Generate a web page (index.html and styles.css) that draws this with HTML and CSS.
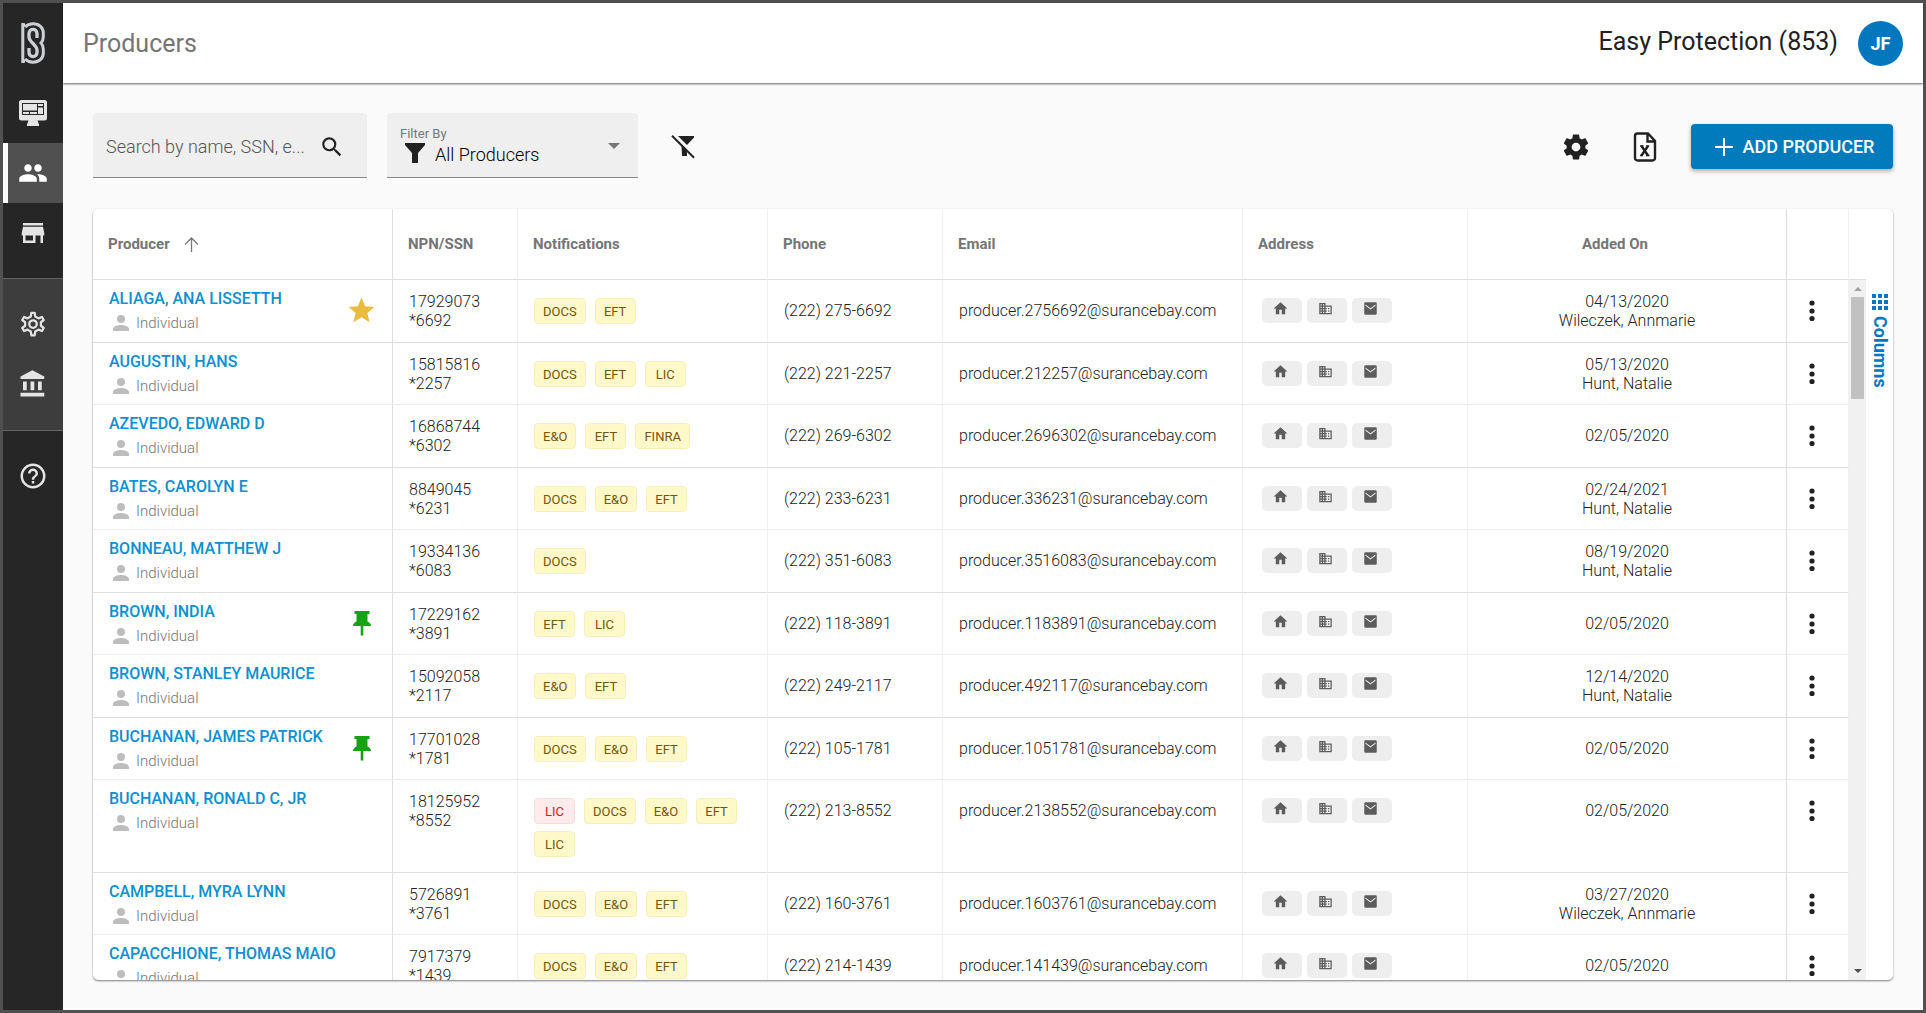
FILE: index.html
```html
<!DOCTYPE html>
<html lang="en">
<head>
  <meta charset="UTF-8" />
  <meta name="viewport" content="width=device-width, initial-scale=1.0" />
  <title>Producers</title>
  <link rel="stylesheet" href="styles.css">
</head>
<body>
  <!-- shared icons -->
  <svg class="sprite" aria-hidden="true">
    <symbol id="i-monitor" viewBox="0 0 28 26">
      <path fill-rule="evenodd" d="M2.500 0h23a2.500 2.500 0 0 1 2.500 2.500v15.500a2.500 2.500 0 0 1-2.500 2.500h-7l1.500 4v1.500h-12v-1.500l1.500-4h-7a2.500 2.500 0 0 1-2.500-2.500v-15.500a2.500 2.500 0 0 1 2.500-2.500zM3 3v12h22v-12z"/>
      <path d="M4 4h14v6.500H4zM19 4h5v2h-5zM19 7.500h5V14h-5zM4 12h6v2H4zM11 12h7v2h-7z"/>
    </symbol>
    <symbol id="i-people" viewBox="0 0 24 24"><path d="M16 11c1.660 0 2.990-1.340 2.990-3S17.660 5 16 5c-1.660 0-3 1.340-3 3s1.340 3 3 3zm-8 0c1.660 0 2.990-1.340 2.990-3S9.660 5 8 5C6.340 5 5 6.340 5 8s1.340 3 3 3zm0 2c-2.330 0-7 1.170-7 3.500V19h14v-2.500c0-2.330-4.670-3.500-7-3.500zm8 0c-.29 0-.62.02-.97.05 1.160.84 1.970 1.970 1.970 3.450V19h6v-2.500c0-2.330-4.670-3.500-7-3.500z"/></symbol>
    <symbol id="i-store" viewBox="0 0 24 24"><path d="M20 4H4v2h16V4zm1 10v-2l-1-5H4l-1 5v2h1v6h10v-6h4v6h2v-6h1zm-9 4H6v-4h6v4z"/></symbol>
    <symbol id="i-cog" viewBox="0 0 24 24"><path d="M12,15.5A3.5,3.5 0 0,1 8.5,12A3.5,3.5 0 0,1 12,8.5A3.5,3.5 0 0,1 15.5,12A3.5,3.5 0 0,1 12,15.5M19.43,12.97C19.47,12.65 19.5,12.33 19.5,12C19.5,11.67 19.47,11.34 19.43,11L21.54,9.37C21.73,9.22 21.78,8.95 21.66,8.73L19.66,5.27C19.54,5.05 19.27,4.96 19.05,5.05L16.56,6.05C16.04,5.66 15.5,5.32 14.87,5.07L14.5,2.42C14.46,2.18 14.25,2 14,2H10C9.75,2 9.54,2.18 9.5,2.42L9.13,5.07C8.5,5.32 7.96,5.66 7.44,6.05L4.95,5.05C4.73,4.96 4.46,5.05 4.34,5.27L2.34,8.73C2.21,8.95 2.27,9.22 2.46,9.37L4.57,11C4.53,11.34 4.5,11.67 4.5,12C4.5,12.33 4.53,12.65 4.57,12.97L2.46,14.63C2.27,14.78 2.21,15.05 2.34,15.27L4.34,18.73C4.46,18.95 4.73,19.03 4.95,18.95L7.44,17.94C7.96,18.34 8.5,18.68 9.13,18.93L9.5,21.58C9.54,21.82 9.75,22 10,22H14C14.25,22 14.46,21.82 14.5,21.58L14.87,18.93C15.5,18.67 16.04,18.34 16.56,17.94L19.05,18.95C19.27,19.03 19.54,18.95 19.66,18.73L21.66,15.27C21.78,15.05 21.73,14.78 21.54,14.63L19.43,12.97Z"/></symbol>
    <symbol id="i-cog-line" viewBox="0 0 24 24">
      <g fill="none" stroke="currentColor" stroke-width="1.8" stroke-linejoin="round"><path d="M10.700 3h2.600l.5 3 2.600 1.500 2.800-1.100 1.400 2.400-2.300 1.800v2.800l2.300 1.800-1.400 2.400-2.800-1.100-2.600 1.500-.5 3h-2.600l-.5-3-2.600-1.500-2.800 1.100-1.400-2.400 2.300-1.800v-2.800l-2.300-1.800 1.400-2.400 2.800 1.100 2.600-1.500z"/><circle cx="12" cy="12" r="3"/></g>
    </symbol>
    <symbol id="i-bank" viewBox="0 0 24 24"><path d="M11.5,1L2,6V8H21V6M16,10V17H19V10M2,22H21V19H2M10,10V17H13V10M4,10V17H7V10H4Z"/></symbol>
    <symbol id="i-help" viewBox="0 0 24 24"><path d="M11,18H13V16H11V18M12,2A10,10 0 0,0 2,12A10,10 0 0,0 12,22A10,10 0 0,0 22,12A10,10 0 0,0 12,2M12,20C7.59,20 4,16.41 4,12C4,7.59 7.59,4 12,4C16.41,4 20,7.59 20,12C20,16.41 16.41,20 12,20M12,6A4,4 0 0,0 8,10H10A2,2 0 0,1 12,8A2,2 0 0,1 14,10C14,12 11,11.75 11,15H13C13,12.75 16,12.5 16,10A4,4 0 0,0 12,6Z"/></symbol>
    <symbol id="i-search" viewBox="0 0 24 24"><path d="M15.500 14h-.79l-.28-.27A6.471 6.471 0 0 0 16 9.500 6.500 6.500 0 1 0 9.500 16c1.610 0 3.090-.59 4.230-1.570l.27.28v.79l5 4.990L20.490 19l-4.990-5zm-6 0C7.010 14 5 11.990 5 9.500S7.010 5 9.500 5 14 7.010 14 9.500 11.990 14 9.500 14z"/></symbol>
    <symbol id="i-funnel" viewBox="0 0 20 20"><path d="M0 0h20v2l-7 8v10H7V10L0 2z"/></symbol>
    <symbol id="i-funnel-off" viewBox="0 0 24 24"><path d="M7 1h16v1.500L16 10zM10.500 11l5.500 5.500V21h-5z"/><path d="M1 .8l22 22" stroke="currentColor" stroke-width="2"/></symbol>
    <symbol id="i-excel" viewBox="0 0 24 30">
      <path d="M4 1.500h11l7 7.500v17a2.500 2.500 0 0 1-2.500 2.500h-15A2.500 2.500 0 0 1 2 26V4a2.500 2.500 0 0 1 2-2.500zM14.500 2v7.500H22" fill="none" stroke="currentColor" stroke-width="2.4"/>
      <path d="M8.500 14l6.500 9.500M15 14l-6.500 9.500" fill="none" stroke="currentColor" stroke-width="2.400"/>
      <path d="M7 14h3.500M13.200 14h3M7 23.600h3M13 23.600h3.500" fill="none" stroke="currentColor" stroke-width="1.500"/>
    </symbol>
    <symbol id="i-person" viewBox="0 0 16 16"><path d="M8 0a4 4 0 1 1 0 8 4 4 0 0 1 0-8zm0 10c3 0 8 1.300 8 4v2H0v-2c0-2.700 5-4 8-4z"/></symbol>
    <symbol id="i-star" viewBox="0 0 24 24"><path d="M12,17.27L18.18,21L16.54,13.97L22,9.24L14.81,8.62L12,2L9.19,8.62L2,9.24L7.45,13.97L5.82,21L12,17.27Z"/></symbol>
    <symbol id="i-pin" viewBox="0 0 18 25"><path d="M1.500 0h15v3h-2v7.500c2 1 3.500 2.200 3.500 4.500h-7.700v9.500H7.700V15H0c0-2.300 1.500-3.500 3.500-4.500V3h-2z"/></symbol>
    <symbol id="i-home" viewBox="0 0 24 24"><path d="M10,21V14H14V21H19.500V12H23L12,2L1,12H4.500V21H10Z"/></symbol>
    <symbol id="i-office" viewBox="0 0 24 24"><path d="M12 7V3H2v18h20V7H12zM6 19H4v-2h2v2zm0-4H4v-2h2v2zm0-4H4V9h2v2zm0-4H4V5h2v2zm4 12H8v-2h2v2zm0-4H8v-2h2v2zm0-4H8V9h2v2zm0-4H8V5h2v2zm10 12h-8v-2h2v-2h-2v-2h2v-2h-2V9h8v10zm-2-8h-2v2h2v-2zm0 4h-2v2h2v-2z"/></symbol>
    <symbol id="i-mail" viewBox="0 0 24 24"><path fill-rule="evenodd" d="M4 2h16a2 2 0 0 1 2 2v16a2 2 0 0 1-2 2H4a2 2 0 0 1-2-2V4a2 2 0 0 1 2-2zM4 5.500v2l8 6 8-6v-2l-8 6z"/></symbol>
    <symbol id="i-dots" viewBox="0 0 6 22"><circle cx="3" cy="3" r="2.600"/><circle cx="3" cy="11" r="2.600"/><circle cx="3" cy="18.500" r="2.600"/></symbol>
  </svg>

  <div class="app">
    <nav class="sidebar">
      <div class="nav-group">
        <a class="logo" href="#" aria-label="Home">
          <svg width="24" height="42" viewBox="0 0 24 42">
            <path d="M1.800 1v40M1.500 2.800h2.500M1.500 39.200h2.500M4 5C6.500 2.500 9 1.800 12 1.800c6 0 10.300 3.700 10.300 9v4c0 3-.8 4.700-2.300 6.200 1.500 1.500 2.300 3.200 2.300 6.200v4c0 5.300-4.300 9-10.300 9-3 0-5.500-.7-8-3.200" stroke-width="3"/>
            <path d="M16 16v-4.500c0-5.500-8-5.500-8 0V15c0 5 8 8 8 13v2.500c0 5.500-8 5.500-8 0V26" stroke-width="3.300"/>
          </svg>
        </a>
        <a class="nav-item" href="#" aria-label="Dashboard"><svg class="nav-wide"><use href="#i-monitor"/></svg></a>
        <a class="nav-item active" href="#" aria-label="Producers"><svg><use href="#i-people"/></svg></a>
        <a class="nav-item" href="#" aria-label="Agencies"><svg><use href="#i-store"/></svg></a>
      </div>
      <div class="nav-group nav-group-mid">
        <a class="nav-item" href="#" aria-label="Settings"><svg><use href="#i-cog-line"/></svg></a>
        <a class="nav-item" href="#" aria-label="Carriers"><svg><use href="#i-bank"/></svg></a>
      </div>
      <div class="nav-group nav-group-last">
        <a class="nav-item" href="#" aria-label="Help"><svg><use href="#i-help"/></svg></a>
      </div>
    </nav>

    <div class="page">
      <header class="topbar">
        <h1>Producers</h1>
        <div class="account">
          <span class="agency">Easy Protection (853)</span>
          <button class="avatar">JF</button>
        </div>
      </header>

      <main class="content">
        <div class="toolbar">
          <div class="field search">
            <input type="text" aria-label="Search" placeholder="Search by name, SSN, e..." />
            <svg width="26" height="26"><use href="#i-search"/></svg>
          </div>
          <div class="field filter">
            <label for="filterBy">Filter By</label>
            <div class="filter-value">
              <svg width="20" height="20"><use href="#i-funnel"/></svg>
              <select id="filterBy"><option>All Producers</option></select>
            </div>
            <span class="caret"></span>
          </div>
          <button class="icon-btn" aria-label="Clear filters"><svg width="24" height="24"><use href="#i-funnel-off"/></svg></button>
          <div class="toolbar-right">
            <button class="icon-btn" aria-label="Table settings"><svg width="30" height="30"><use href="#i-cog"/></svg></button>
            <button class="icon-btn" aria-label="Export to Excel"><svg width="24" height="30"><use href="#i-excel"/></svg></button>
            <button class="add-btn"><svg width="18" height="18" viewBox="0 0 18 18"><path d="M9 0v18M0 9h18" stroke="#fff" stroke-width="2"/></svg>ADD PRODUCER</button>
          </div>
        </div>

        <div class="card">
          <div class="table-wrap">
            <table>
              <colgroup>
                <col class="col-producer"><col class="col-npn"><col class="col-notif"><col class="col-phone"><col class="col-email"><col class="col-address"><col><col class="col-menu">
              </colgroup>
              <thead>
                <tr>
                  <th class="pinned"><div class="sorted">Producer <svg width="15" height="15" viewBox="0 0 15 15"><path d="M7.500 15V1M1 7.500L7.500 1 14 7.500" fill="none" stroke="#777" stroke-width="1.300"/></svg></div></th>
                  <th>NPN/SSN</th>
                  <th>Notifications</th>
                  <th>Phone</th>
                  <th>Email</th>
                  <th>Address</th>
                  <th class="added pinned">Added On</th>
                  <th></th>
                </tr>
              </thead>
              <tbody>
                <tr>
                  <td class="producer pinned"><div class="who"><div><a href="#">ALIAGA, ANA LISSETTH</a><span class="kind"><svg><use href="#i-person"/></svg>Individual</span></div><svg class="star"><use href="#i-star"/></svg></div></td>
                  <td class="two">17929073<br>*6692</td>
                  <td><div class="chips"><span>DOCS</span><span>EFT</span></div></td>
                  <td class="one">(222) 275-6692</td>
                  <td class="one">producer.2756692@surancebay.com</td>
                  <td><div class="places"><button aria-label="Home"><svg><use href="#i-home"/></svg></button><button aria-label="Office"><svg><use href="#i-office"/></svg></button><button aria-label="Mail"><svg><use href="#i-mail"/></svg></button></div></td>
                  <td class="two added pinned">04/13/2020<br>Wileczek, Annmarie</td>
                  <td><button class="menu" aria-label="More"><svg><use href="#i-dots"/></svg></button></td>
                </tr>
                <tr>
                  <td class="producer pinned"><div class="who"><div><a href="#">AUGUSTIN, HANS</a><span class="kind"><svg><use href="#i-person"/></svg>Individual</span></div></div></td>
                  <td class="two">15815816<br>*2257</td>
                  <td><div class="chips"><span>DOCS</span><span>EFT</span><span>LIC</span></div></td>
                  <td class="one">(222) 221-2257</td>
                  <td class="one">producer.212257@surancebay.com</td>
                  <td><div class="places"><button aria-label="Home"><svg><use href="#i-home"/></svg></button><button aria-label="Office"><svg><use href="#i-office"/></svg></button><button aria-label="Mail"><svg><use href="#i-mail"/></svg></button></div></td>
                  <td class="two added pinned">05/13/2020<br>Hunt, Natalie</td>
                  <td><button class="menu" aria-label="More"><svg><use href="#i-dots"/></svg></button></td>
                </tr>
                <tr>
                  <td class="producer pinned"><div class="who"><div><a href="#">AZEVEDO, EDWARD D</a><span class="kind"><svg><use href="#i-person"/></svg>Individual</span></div></div></td>
                  <td class="two">16868744<br>*6302</td>
                  <td><div class="chips"><span>E&amp;O</span><span>EFT</span><span>FINRA</span></div></td>
                  <td class="one">(222) 269-6302</td>
                  <td class="one">producer.2696302@surancebay.com</td>
                  <td><div class="places"><button aria-label="Home"><svg><use href="#i-home"/></svg></button><button aria-label="Office"><svg><use href="#i-office"/></svg></button><button aria-label="Mail"><svg><use href="#i-mail"/></svg></button></div></td>
                  <td class="one added pinned">02/05/2020</td>
                  <td><button class="menu" aria-label="More"><svg><use href="#i-dots"/></svg></button></td>
                </tr>
                <tr>
                  <td class="producer pinned"><div class="who"><div><a href="#">BATES, CAROLYN E</a><span class="kind"><svg><use href="#i-person"/></svg>Individual</span></div></div></td>
                  <td class="two">8849045<br>*6231</td>
                  <td><div class="chips"><span>DOCS</span><span>E&amp;O</span><span>EFT</span></div></td>
                  <td class="one">(222) 233-6231</td>
                  <td class="one">producer.336231@surancebay.com</td>
                  <td><div class="places"><button aria-label="Home"><svg><use href="#i-home"/></svg></button><button aria-label="Office"><svg><use href="#i-office"/></svg></button><button aria-label="Mail"><svg><use href="#i-mail"/></svg></button></div></td>
                  <td class="two added pinned">02/24/2021<br>Hunt, Natalie</td>
                  <td><button class="menu" aria-label="More"><svg><use href="#i-dots"/></svg></button></td>
                </tr>
                <tr>
                  <td class="producer pinned"><div class="who"><div><a href="#">BONNEAU, MATTHEW J</a><span class="kind"><svg><use href="#i-person"/></svg>Individual</span></div></div></td>
                  <td class="two">19334136<br>*6083</td>
                  <td><div class="chips"><span>DOCS</span></div></td>
                  <td class="one">(222) 351-6083</td>
                  <td class="one">producer.3516083@surancebay.com</td>
                  <td><div class="places"><button aria-label="Home"><svg><use href="#i-home"/></svg></button><button aria-label="Office"><svg><use href="#i-office"/></svg></button><button aria-label="Mail"><svg><use href="#i-mail"/></svg></button></div></td>
                  <td class="two added pinned">08/19/2020<br>Hunt, Natalie</td>
                  <td><button class="menu" aria-label="More"><svg><use href="#i-dots"/></svg></button></td>
                </tr>
                <tr>
                  <td class="producer pinned"><div class="who"><div><a href="#">BROWN, INDIA</a><span class="kind"><svg><use href="#i-person"/></svg>Individual</span></div><svg class="pin"><use href="#i-pin"/></svg></div></td>
                  <td class="two">17229162<br>*3891</td>
                  <td><div class="chips"><span>EFT</span><span>LIC</span></div></td>
                  <td class="one">(222) 118-3891</td>
                  <td class="one">producer.1183891@surancebay.com</td>
                  <td><div class="places"><button aria-label="Home"><svg><use href="#i-home"/></svg></button><button aria-label="Office"><svg><use href="#i-office"/></svg></button><button aria-label="Mail"><svg><use href="#i-mail"/></svg></button></div></td>
                  <td class="one added pinned">02/05/2020</td>
                  <td><button class="menu" aria-label="More"><svg><use href="#i-dots"/></svg></button></td>
                </tr>
                <tr>
                  <td class="producer pinned"><div class="who"><div><a href="#">BROWN, STANLEY MAURICE</a><span class="kind"><svg><use href="#i-person"/></svg>Individual</span></div></div></td>
                  <td class="two">15092058<br>*2117</td>
                  <td><div class="chips"><span>E&amp;O</span><span>EFT</span></div></td>
                  <td class="one">(222) 249-2117</td>
                  <td class="one">producer.492117@surancebay.com</td>
                  <td><div class="places"><button aria-label="Home"><svg><use href="#i-home"/></svg></button><button aria-label="Office"><svg><use href="#i-office"/></svg></button><button aria-label="Mail"><svg><use href="#i-mail"/></svg></button></div></td>
                  <td class="two added pinned">12/14/2020<br>Hunt, Natalie</td>
                  <td><button class="menu" aria-label="More"><svg><use href="#i-dots"/></svg></button></td>
                </tr>
                <tr>
                  <td class="producer pinned"><div class="who"><div><a href="#">BUCHANAN, JAMES PATRICK</a><span class="kind"><svg><use href="#i-person"/></svg>Individual</span></div><svg class="pin"><use href="#i-pin"/></svg></div></td>
                  <td class="two">17701028<br>*1781</td>
                  <td><div class="chips"><span>DOCS</span><span>E&amp;O</span><span>EFT</span></div></td>
                  <td class="one">(222) 105-1781</td>
                  <td class="one">producer.1051781@surancebay.com</td>
                  <td><div class="places"><button aria-label="Home"><svg><use href="#i-home"/></svg></button><button aria-label="Office"><svg><use href="#i-office"/></svg></button><button aria-label="Mail"><svg><use href="#i-mail"/></svg></button></div></td>
                  <td class="one added pinned">02/05/2020</td>
                  <td><button class="menu" aria-label="More"><svg><use href="#i-dots"/></svg></button></td>
                </tr>
                <tr>
                  <td class="producer pinned"><div class="who"><div><a href="#">BUCHANAN, RONALD C, JR</a><span class="kind"><svg><use href="#i-person"/></svg>Individual</span></div></div></td>
                  <td class="two">18125952<br>*8552</td>
                  <td><div class="chips"><span class="red">LIC</span><span>DOCS</span><span>E&amp;O</span><span>EFT</span><span>LIC</span></div></td>
                  <td class="one">(222) 213-8552</td>
                  <td class="one">producer.2138552@surancebay.com</td>
                  <td><div class="places"><button aria-label="Home"><svg><use href="#i-home"/></svg></button><button aria-label="Office"><svg><use href="#i-office"/></svg></button><button aria-label="Mail"><svg><use href="#i-mail"/></svg></button></div></td>
                  <td class="one added pinned">02/05/2020</td>
                  <td><button class="menu" aria-label="More"><svg><use href="#i-dots"/></svg></button></td>
                </tr>
                <tr>
                  <td class="producer pinned"><div class="who"><div><a href="#">CAMPBELL, MYRA LYNN</a><span class="kind"><svg><use href="#i-person"/></svg>Individual</span></div></div></td>
                  <td class="two">5726891<br>*3761</td>
                  <td><div class="chips"><span>DOCS</span><span>E&amp;O</span><span>EFT</span></div></td>
                  <td class="one">(222) 160-3761</td>
                  <td class="one">producer.1603761@surancebay.com</td>
                  <td><div class="places"><button aria-label="Home"><svg><use href="#i-home"/></svg></button><button aria-label="Office"><svg><use href="#i-office"/></svg></button><button aria-label="Mail"><svg><use href="#i-mail"/></svg></button></div></td>
                  <td class="two added pinned">03/27/2020<br>Wileczek, Annmarie</td>
                  <td><button class="menu" aria-label="More"><svg><use href="#i-dots"/></svg></button></td>
                </tr>
                <tr>
                  <td class="producer pinned"><div class="who"><div><a href="#">CAPACCHIONE, THOMAS MAIO</a><span class="kind"><svg><use href="#i-person"/></svg>Individual</span></div></div></td>
                  <td class="two">7917379<br>*1439</td>
                  <td><div class="chips"><span>DOCS</span><span>E&amp;O</span><span>EFT</span></div></td>
                  <td class="one">(222) 214-1439</td>
                  <td class="one">producer.141439@surancebay.com</td>
                  <td><div class="places"><button aria-label="Home"><svg><use href="#i-home"/></svg></button><button aria-label="Office"><svg><use href="#i-office"/></svg></button><button aria-label="Mail"><svg><use href="#i-mail"/></svg></button></div></td>
                  <td class="one added pinned">02/05/2020</td>
                  <td><button class="menu" aria-label="More"><svg><use href="#i-dots"/></svg></button></td>
                </tr>
              </tbody>
            </table>
          </div>
          <div class="scroll">
            <div class="scroll-head"></div>
            <div class="scroll-track">
              <span class="arrow-up"></span>
              <span class="thumb"></span>
              <span class="arrow-down"></span>
            </div>
          </div>
          <div class="side">
            <button class="columns-btn">
              <svg width="16" height="16" viewBox="0 0 16 16"><path d="M0 0h4v4H0zM6 0h4v4H6zM12 0h4v4h-4zM0 6h4v4H0zM6 6h4v4H6zM12 6h4v4h-4zM0 12h4v4H0zM6 12h4v4H6zM12 12h4v4h-4z"/></svg>
              <span>Columns</span>
            </button>
          </div>
        </div>
      </main>
    </div>
  </div>
</body>
</html>
```
FILE: styles.css
```css
* {
  box-sizing: border-box;
}
body {
  font-family: Roboto, sans-serif;
  font-size: 16px;
  margin: 0;
  color: #212121;
  background: #fafafa;
}
svg {
  display: block;
  flex: none;
  fill: currentColor;
}
a {
  text-decoration: none;
}
button {
  font-family: inherit;
  border: none;
  background: none;
  padding: 0;
  cursor: pointer;
  color: inherit;
}
.sprite {
  display: none;
}
.app {
  display: flex;
  height: 100vh;
  border: 3px solid #505050;
}

/* sidebar */
.sidebar {
  width: 60px;
  flex: none;
  background: #262626;
  display: flex;
  flex-direction: column;
}
.logo {
  height: 80px;
  display: flex;
  align-items: center;
  justify-content: center;
}
.logo svg {
  fill: none;
  stroke: #cdd1d6;
}
.nav-group {
  padding-bottom: 15px;
}
.nav-group-mid {
  background: #3d3d3d;
  border-top: 1px solid #666;
  border-bottom: 1px solid #666;
  padding: 15px 0 16px;
}
.nav-group-last {
  padding-top: 15px;
}
.nav-item {
  height: 60px;
  display: flex;
  align-items: center;
  justify-content: center;
  color: #e4e4e4;
}
.nav-item svg {
  width: 30px;
  height: 30px;
}
.nav-item .nav-wide {
  width: 28px;
  height: 26px;
}
.nav-item.active {
  background: #505050;
  border-left: 5px solid #fff;
  padding-right: 5px;
  color: #fff;
}

/* header */
.page {
  flex: 1;
  min-width: 0;
  display: flex;
  flex-direction: column;
}
.topbar {
  height: 80px;
  flex: none;
  background: #fff;
  box-shadow: 0 1px 2px rgba(0, 0, 0, 0.6);
  display: flex;
  align-items: center;
  justify-content: space-between;
  padding: 0 20px;
}
h1 {
  margin: 0;
  font-size: 25px;
  font-weight: 400;
  color: #757575;
}
.account {
  display: flex;
  align-items: center;
  gap: 20px;
}
.agency {
  font-size: 25px;
  line-height: 28px;
  padding-bottom: 2px;
}
.avatar {
  width: 45px;
  height: 45px;
  border-radius: 50%;
  background: #0277bd;
  color: #fff;
  font-size: 18px;
  font-weight: 700;
}

/* toolbar */
.content {
  flex: 1;
  min-height: 0;
  padding: 30px;
  display: flex;
  flex-direction: column;
  gap: 31px;
}
.toolbar {
  display: flex;
  align-items: center;
}
.field {
  height: 65px;
  background: #efefef;
  border-bottom: 1px solid #888;
  border-radius: 4px 4px 0 0;
  margin-right: 20px;
}
.search {
  width: 274px;
  display: flex;
  align-items: center;
  padding: 3px 22px 0 13px;
}
.search input {
  flex: 1;
  min-width: 0;
  border: none;
  outline: none;
  background: none;
  padding: 0;
  font-family: inherit;
  font-size: 18px;
  font-weight: 300;
}
.search input::placeholder {
  color: #555;
}
.filter {
  width: 251px;
  display: grid;
  grid-template-columns: 1fr auto;
  align-content: center;
  align-items: center;
  padding: 2px 18px 0 13px;
}
.filter label {
  grid-column: 1;
  font-size: 13px;
  line-height: 18px;
  color: #777;
}
.filter-value {
  grid-column: 1;
  display: flex;
  align-items: flex-start;
  gap: 10px;
  padding-left: 5px;
}
.filter-value select {
  appearance: none;
  border: none;
  background: none;
  padding: 0;
  font-family: inherit;
  font-size: 18px;
  font-weight: 300;
  line-height: 24px;
  color: #000;
}
.caret {
  grid-column: 2;
  grid-row: 1 / 3;
  border: 6px solid transparent;
  border-top-color: #777;
  border-bottom: none;
}
.icon-btn {
  padding: 7px 5px 5px;
  margin-left: 8px;
}
.toolbar-right {
  margin-left: auto;
  padding-top: 2px;
  display: flex;
  align-items: center;
  gap: 24px;
}
.toolbar-right .icon-btn {
  padding: 5px;
}
.add-btn {
  height: 45px;
  width: 202px;
  margin-left: 5px;
  border-radius: 4px;
  background: #027bbd;
  color: #fff;
  font-size: 18px;
  font-weight: 500;
  display: flex;
  align-items: center;
  justify-content: center;
  gap: 10px;
  padding-left: 5px;
  box-shadow: 0 2px 4px rgba(0, 0, 0, 0.35);
}

/* table */
.card {
  flex: 1;
  min-height: 0;
  background: #fff;
  border-radius: 5px;
  box-shadow: 0 1px 2px rgba(0, 0, 0, 0.5);
  display: flex;
  overflow: hidden;
}
.table-wrap {
  flex: 1;
  min-width: 0;
  overflow: hidden;
}
table {
  width: 100%;
  table-layout: fixed;
  border-collapse: separate;
  border-spacing: 0;
}
.col-producer, .col-email {
  width: 300px;
}
.col-npn {
  width: 125px;
}
.col-notif {
  width: 250px;
}
.col-phone {
  width: 175px;
}
.col-address {
  width: 225px;
}
.col-menu {
  width: 62px;
}
th {
  height: 71px;
  padding: 0 15px;
  text-align: left;
  font-size: 15px;
  font-weight: 700;
  color: #757575;
  border-bottom: 1px solid #dedede;
  border-right: 1px solid #f0f0f0;
}
.sorted {
  display: flex;
  align-items: center;
  gap: 14px;
}
td {
  height: 62px;
  padding: 0 16px;
  vertical-align: top;
  font-weight: 300;
  white-space: nowrap;
  border-bottom: 1px solid #ececec;
  border-right: 1px solid #f0f0f0;
}
tr:nth-child(odd) td {
  height: 63px;
  border-bottom-color: #dedede;
}
th.pinned, td.pinned {
  border-right-color: #dedede;
}
.added {
  text-align: center;
}
th.added {
  padding-right: 39px;
}
.one {
  line-height: 61px;
}
.two {
  line-height: 19px;
  padding-top: 12px;
}
.who {
  display: flex;
  justify-content: space-between;
  align-items: center;
  height: 61px;
}
.who a {
  display: block;
  line-height: 24px;
  font-weight: 500;
  color: #0d8fd0;
}
.kind {
  display: flex;
  align-items: center;
  gap: 7px;
  padding-left: 4px;
  font-size: 15px;
  line-height: 24px;
  color: #757575;
}
.kind svg {
  width: 16px;
  height: 16px;
  color: #bdbdbd;
}
.star {
  width: 31px;
  height: 31px;
  margin-right: -1px;
  color: #e9bb3f;
}
.pin {
  width: 18px;
  height: 25px;
  margin-right: 5px;
  color: #13a313;
}
.chips {
  display: flex;
  flex-wrap: wrap;
  gap: 7px 9px;
  padding: 18px 0 15px;
}
.chips span {
  height: 26px;
  min-width: 41px;
  padding: 0 8px;
  border: 1px solid #f7efbb;
  border-radius: 4px;
  background: #fff9c9;
  color: #75560f;
  font-size: 13px;
  font-weight: 400;
  line-height: 25px;
  text-align: center;
}
.chips .red {
  background: #ffebeb;
  border-color: #fbdcdc;
  color: #d32020;
}
.places {
  display: flex;
  gap: 5px;
  padding: 18px 0 0 3px;
}
.places button {
  width: 40px;
  height: 25px;
  border-radius: 5px;
  background: #eee;
  color: #5c5c5c;
  display: flex;
  justify-content: center;
  padding: 3px 3px 0 0;
}
.places svg {
  width: 15px;
  height: 15px;
}
.menu {
  width: 18px;
  height: 61px;
  display: flex;
  align-items: center;
  justify-content: center;
}
.menu svg {
  width: 6px;
  height: 22px;
}

/* scrollbar and column panel */
.scroll {
  width: 17px;
  display: flex;
  flex-direction: column;
}
.scroll-head {
  height: 71px;
  flex: none;
  border-bottom: 1px solid #dedede;
}
.scroll-track {
  flex: 1;
  background: #f1f1f1;
  display: flex;
  flex-direction: column;
  align-items: center;
  padding: 7px 0;
}
.arrow-up {
  border: 4px solid transparent;
  border-top: none;
  border-bottom-color: #a3a3a3;
}
.thumb {
  width: 13px;
  height: 102px;
  margin-top: 6px;
  background: #c1c1c1;
}
.arrow-down {
  margin-top: auto;
  border: 4px solid transparent;
  border-bottom: none;
  border-top-color: #505050;
}
.side {
  width: 27px;
  padding-top: 85px;
}
.columns-btn {
  width: 100%;
  display: flex;
  flex-direction: column;
  align-items: center;
  gap: 6px;
  color: #0277bd;
}
.columns-btn span {
  writing-mode: vertical-rl;
  font-size: 18px;
  line-height: 20px;
  font-weight: 700;
}
```
